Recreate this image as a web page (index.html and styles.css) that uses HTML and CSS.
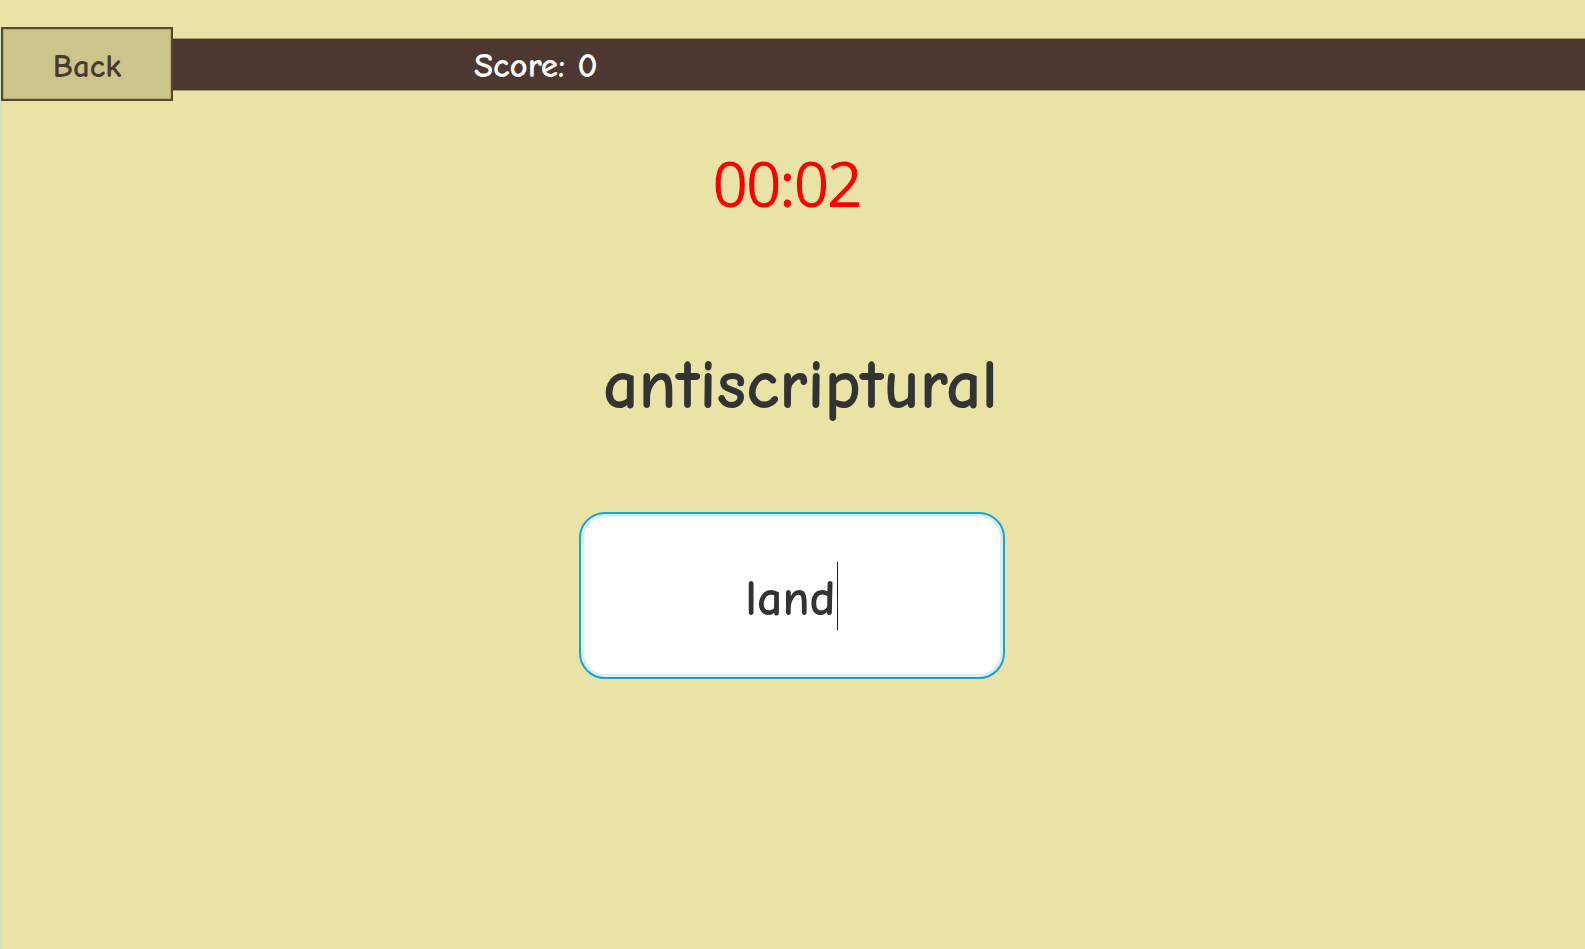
FILE: index.html
```html
<!DOCTYPE html>
<html>
<head>
<meta charset="utf-8">
<link rel="stylesheet" href="styles.css">
</head>
<body>
<div class="page">
  <header class="topbar">
    <button class="back">Back</button>
    <div class="bar"><span class="score">Score: 0</span></div>
  </header>
  <main class="game">
    <div class="timer">00:02</div>
    <div class="word">antiscriptural</div>
    <div class="answer"><span class="typed">land</span><span class="caret"></span></div>
  </main>
</div>
</body>
</html>
```
FILE: styles.css
```css
html, body {
  margin: 0;
  padding: 0;
  height: 100%;
}
body {
  background: #e9e3a6;
  font-family: "Comic Sans MS", "Comic Neue", "DejaVu Sans", sans-serif;
  font-weight: 700;
  overflow: hidden;
}
.page {
  height: 100%;
  border-left: 2px solid #d6e4c6;
  box-sizing: border-box;
}
.topbar {
  display: flex;
  align-items: center;
  margin-top: 27px;
  height: 74px;
}
.back {
  width: 172px;
  height: 74px;
  margin-left: -1px;
  background: #cbc58b;
  border: 2px solid #574536;
  box-shadow: inset 0 0 0 1px #b8ae78;
  color: #4a3a30;
  font-family: inherit;
  font-weight: 700;
  font-size: 33px;
  padding: 4px 0 0 0;
  flex: none;
  position: relative;
  z-index: 1;
}
.bar {
  flex: 1;
  height: 53px;
  box-sizing: border-box;
  background: #4c3830;
  border-top: 1px solid #a8986c;
  border-bottom: 1px solid #a8986c;
  display: flex;
  align-items: center;
  padding-left: 301px;
  padding-top: 3px;
}
.score {
  color: #ffffff;
  font-size: 35px;
}
.game {
  display: flex;
  flex-direction: column;
  align-items: center;
}
.timer {
  margin-top: 42px;
  color: #ff0000;
  font-family: "Segoe UI", "Open Sans", "Noto Sans", sans-serif;
  font-weight: 400;
  font-size: 62px;
  letter-spacing: -2px;
  line-height: 80px;
  margin-left: -14px;
}
.word {
  margin-top: 121px;
  color: #333333;
  font-size: 70px;
  line-height: 84px;
  margin-left: 14px;
}
.answer {
  margin-top: 84px;
  margin-left: -4px;
  width: 426px;
  height: 167px;
  box-sizing: border-box;
  background: #ffffff;
  border: 2px solid #1ba1d9;
  border-radius: 26px;
  box-shadow: inset 0 0 0 3px #d9eef8;
  display: flex;
  align-items: center;
  justify-content: center;
}
.typed {
  color: #333333;
  font-size: 50px;
  line-height: 60px;
  padding-top: 6px;
}
.caret {
  width: 1px;
  height: 68px;
  background: #222;
  margin-left: 1px;
}
```
